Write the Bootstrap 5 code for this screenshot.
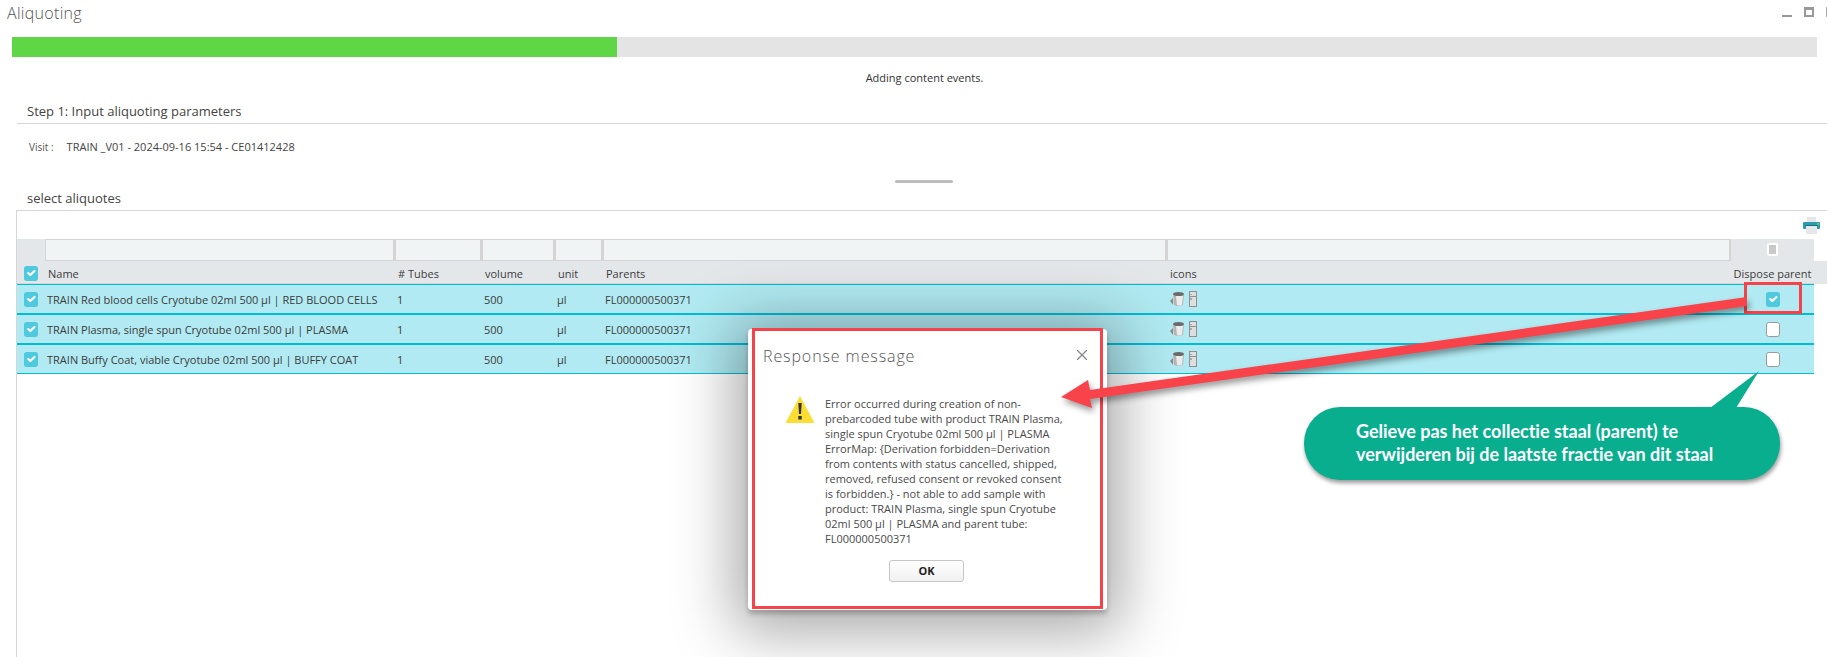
<!DOCTYPE html>
<html lang="en">
<head>
  <meta charset="UTF-8" />
  <title>Aliquoting</title>
  <link rel="stylesheet" href="https://cdn.jsdelivr.net/npm/bootstrap@5.3.0/dist/css/bootstrap.min.css" />
  <style>
    html, body { height: 100%; }
    body {
      position: relative;
      overflow: hidden;
      background: #fff;
      color: #3c3c3c;
      font-family: "Open Sans", "Liberation Sans", sans-serif;
      font-size: 11px;
    }
    /* window title */
    .win-head { height: 26px; padding-left: 7px; }
    .win-title { font-size: 16px; font-weight: 300; color: #555; letter-spacing: .3px; }
    .win-btn { position: absolute; top: 7px; border: 2px solid #999; border-top-width: 3px; width: 10px; height: 10px; left: 1804px; }
    .win-min { position: absolute; top: 15px; left: 1782px; width: 10px; height: 2px; background: #999; }
    .win-stub { position: absolute; top: 7px; left: 1826px; width: 1px; height: 10px; background: #aaa; }
    /* progress */
    .load-bar { height: 20px; margin: 11px 10px 0 12px; background: #e4e4e4; border-radius: 0; }
    .load-bar .progress-bar { background: #5fd646; }
    .load-status { height: 16px; margin-top: 13px; text-align: center; font-size: 11px; line-height: 16px; padding-left: 22px; color: #333; }
    /* sections */
    .step-head { margin: 14px 0 0 17px; height: 24px; padding-left: 10px; border-bottom: 1px solid #d6d6d6; font-size: 13px; line-height: 22px; color: #444; }
    .visit-line { margin: 15px 0 0 29px; height: 16px; line-height: 16px; font-size: 10px; color: #555; }
    .visit-line span { margin-left: 13px; font-size: 11px; color: #444; }
    .drag-handle { width: 58px; height: 3px; margin: 25px 0 0 895px; background: #bdbdbd; border-radius: 2px; }
    .sel-head { margin: 5px 0 0 27px; height: 20px; font-size: 13px; line-height: 20px; color: #444; }
    /* table box */
    .grid-box { margin: 2px 0 0 16px; border-top: 1px solid #d6d6d6; border-left: 1px solid #d6d6d6; height: 448px; }
    .grid-tools { height: 28px; padding: 6px 7px 0 0; }
    .grid-table { table-layout: fixed; width: 1810px; margin: 0; border-collapse: separate; border-spacing: 0; font-size: 11px; }
    .grid-table > :not(caption) > * > * { padding: 0; border: 0; box-shadow: none; background: transparent; color: #3c3c3c; }
    .grid-table .filter-row > * { height: 22px; background: #e4e7ea; vertical-align: middle; }
    .grid-table .filter-row > .spare-cell { background: #fff; }
    .filter-box { display: block; width: 100%; height: 22px; padding: 0; border-radius: 0; border: 1px solid #d4d4d4; border-width: 1px 2px 1px 1px; background: #f1f4f5; }
    .grid-table .name-row > * { height: 23px; background: #e4e7ea; font-weight: 400; vertical-align: middle; padding: 4px 0 0 3px; border-bottom: 1px solid #d6d6d6; }
    .grid-table .name-row > .spare-cell { border-bottom: 0; }
    .grid-table .data-row > * { height: 30px; background: #b1eaf2; border-bottom: 2px solid #00bcd4; vertical-align: middle; padding: 2px 0 0 2px; }
    .grid-table .data-row:first-child > * { height: 31px; border-top: 1px solid #00bcd4; }
    .grid-table .data-row:last-child > * { height: 29px; border-bottom-width: 1px; }
    .grid-table .data-row > .spare-cell { background: #fff; border: 0; }
    .grid-table .check-cell { padding: 0 0 0 7px !important; }
    .grid-table .name-row .check-cell { padding-top: 2px !important; }
    .grid-table .icon-cell { vertical-align: middle; padding-left: 3px; }
    .grid-table .mid-cell { padding: 0 !important; text-align: center; }
    .grid-table .head-right { padding: 4px 0 0 !important; text-align: center; white-space: nowrap; }
    .tick-box { display: block; width: 14px; height: 15px; margin: 0; border-radius: 2px; border: 0; float: none; background-color: #fff; }
    .tick-box:checked { background-color: #4fc9de; }
    .tick-box:not(:checked) { border: 1px solid #9a9a9a; }
    .tick-box.form-check-input:focus { box-shadow: none; }
    .mid-cell .tick-box { margin: 0 auto; }
    .mini-box { display: inline-block; width: 11px; height: 13px; margin-top: -2px; border-radius: 2px; border: 2px solid #fff; background: #c9c9c9; vertical-align: middle; }
    .row-icons { display: flex; align-items: center; gap: 4px; margin-top: -3px; }
    /* modal */
    .resp-modal {
      position: absolute; left: 748px; top: 329px; width: 359px; height: 281px;
      border: 0; border-radius: 4px; background: #fff;
      box-shadow: 0 4px 5px rgba(0,0,0,.22), 0 8px 60px 14px rgba(0,0,0,.34);
    }
    .resp-title { position: absolute; left: 15px; top: 15px; font-size: 16px; font-weight: 300; letter-spacing: .9px; color: #555; line-height: 24px; }
    .resp-close { position: absolute; right: 20px; top: 21px; font-size: 0; padding: 0; width: 10px; height: 10px; border: 0; background: transparent; }
    .resp-body { position: absolute; left: 77px; top: 67px; font-size: 11px; line-height: 15px; color: #4a4a4a; white-space: nowrap; }
    .resp-warn { position: absolute; left: 37px; top: 66px; }
    .resp-ok { position: absolute; left: 141px; top: 231px; width: 75px; height: 22px; padding: 0; border-radius: 3px; border: 1px solid #c6c6c6; background: linear-gradient(#fff, #f1f1f1); font-size: 11px; font-weight: 700; color: #222; }
    .red-frame { position: absolute; border: 3px solid #f4434a; }
    .red-frame-modal { left: 752px; top: 328px; width: 351px; height: 281px; }
    .red-frame-check { left: 1744px; top: 282px; width: 58px; height: 32px; }
    .arrow-layer { position: absolute; left: 0; top: 0; filter: drop-shadow(2px 4px 3px rgba(0,0,0,.4)); }
    /* callout */
    .call-out {
      position: absolute; left: 1304px; top: 407px; width: 476px; height: 73px;
      padding: 13px 0 0 52px;
      border-radius: 36px; background: #09ae8f; color: #fff;
      font-family: Lato, "Liberation Sans", sans-serif; font-size: 18px; font-weight: 700; line-height: 23px; white-space: nowrap;
      font-variant-ligatures: none;
      box-shadow: 1px 3px 4px rgba(0,0,0,.4);
    }
    .call-tail { position: absolute; left: 400px; top: -36px; }
  </style>
</head>
<body>
  <div class="win-head d-flex align-items-center">
    <span class="win-title">Aliquoting</span>
  </div>
  <span class="win-min"></span>
  <span class="win-btn"></span>
  <span class="win-stub"></span>

  <div class="progress load-bar">
    <div class="progress-bar" style="width: 33.5%"></div>
  </div>
  <div class="load-status">Adding content events.</div>

  <div class="step-head">Step 1: Input aliquoting parameters</div>
  <div class="visit-line">Visit :<span>TRAIN _V01 - 2024-09-16 15:54 - CE01412428</span></div>
  <div class="drag-handle"></div>
  <div class="sel-head">select aliquotes</div>

  <div class="grid-box">
    <div class="grid-tools d-flex justify-content-end">
      <svg width="17" height="17" viewBox="0 0 17 17">
        <rect x="4" y="0" width="9" height="5" fill="#e4e8ea"/>
        <rect x="0" y="5" width="17" height="7" rx="1" fill="#2f9bb0"/>
        <rect x="14" y="6" width="2" height="2" fill="#5fd646"/>
        <rect x="3" y="9" width="11" height="8" fill="#e4e8ea"/>
        <rect x="2" y="8" width="13" height="1" fill="#14707f"/>
      </svg>
    </div>
    <table class="table grid-table">
      <colgroup>
        <col style="width: 28px" /><col style="width: 350px" /><col style="width: 87px" /><col style="width: 73px" />
        <col style="width: 48px" /><col style="width: 564px" /><col style="width: 564px" /><col style="width: 83px" /><col style="width: 13px" />
      </colgroup>
      <thead>
        <tr class="filter-row">
          <th></th>
          <th><input class="form-control filter-box" /></th>
          <th><input class="form-control filter-box" /></th>
          <th><input class="form-control filter-box" /></th>
          <th><input class="form-control filter-box" /></th>
          <th><input class="form-control filter-box" /></th>
          <th><input class="form-control filter-box" /></th>
          <th class="text-center"><span class="mini-box"></span></th>
          <th class="spare-cell"></th>
        </tr>
        <tr class="name-row">
          <th class="check-cell"><input class="form-check-input tick-box" type="checkbox" checked /></th>
          <th>Name</th>
          <th># Tubes</th>
          <th>volume</th>
          <th>unit</th>
          <th>Parents</th>
          <th>icons</th>
          <th class="head-right">Dispose parent</th>
          <th class="spare-cell"></th>
        </tr>
      </thead>
      <tbody id="rows"></tbody>
    </table>
  </div>

  <!-- response dialog -->
  <div class="modal-content resp-modal">
    <div class="resp-title">Response message</div>
    <button class="resp-close" aria-label="Close">
      <svg width="10" height="10" viewBox="0 0 10 10"><path d="M0 0L10 10M10 0L0 10" stroke="#8a8a8a" stroke-width="1.3"/></svg>
    </button>
    <svg class="resp-warn" width="30" height="29" viewBox="0 0 30 29">
      <path d="M15 1L29.500 28H.5z" fill="#fbdd33"/>
      <path d="M13.300 8h3.400l-.7 11h-2zM13.300 21h3.400v3.500h-3.400z" fill="#333"/>
    </svg>
    <div class="resp-body">
      Error occurred during creation of non-<br>
      prebarcoded tube with product TRAIN Plasma,<br>
      single spun Cryotube 02ml 500 µl | PLASMA<br>
      ErrorMap: {Derivation forbidden=Derivation<br>
      from contents with status cancelled, shipped,<br>
      removed, refused consent or revoked consent<br>
      is forbidden.} - not able to add sample with<br>
      product: TRAIN Plasma, single spun Cryotube<br>
      02ml 500 µl | PLASMA and parent tube:<br>
      FL000000500371
    </div>
    <button class="btn resp-ok">OK</button>
  </div>

  <!-- annotations -->
  <div class="red-frame red-frame-modal"></div>
  <div class="red-frame red-frame-check"></div>
  <svg class="arrow-layer" width="1827" height="657" viewBox="0 0 1827 657">
    <polygon points="1747,297 1747,306 1090,399 1092,408 1061,397 1088,380 1090,390" fill="#f9434a"/>
  </svg>
  <div class="call-out">
    <svg class="call-tail" width="60" height="38" viewBox="0 0 60 38">
      <polygon points="55,0 6,37 32,37" fill="#09ae8f"/>
    </svg>
    Gelieve pas het collectie staal (parent) te<br>
    verwijderen bij de laatste fractie van dit staal
  </div>

  <script src="https://cdn.jsdelivr.net/npm/bootstrap@5.3.0/dist/js/bootstrap.bundle.min.js"></script>
  <script>
    // table rows
    const aliquots = [
      { name: "TRAIN Red blood cells Cryotube 02ml 500 µl | RED BLOOD CELLS", dispose: true },
      { name: "TRAIN Plasma, single spun Cryotube 02ml 500 µl | PLASMA", dispose: false },
      { name: "TRAIN Buffy Coat, viable Cryotube 02ml 500 µl | BUFFY COAT", dispose: false }
    ];
    const icons = `<div class="row-icons">
      <svg width="15" height="16" viewBox="0 0 15 16">
        <path d="M3 3h11l-1 11q-4 2-9 0z" fill="#b5b5b5"/>
        <path d="M6 5h7l-1 9q-3 1-5 0z" fill="#ececec"/>
        <ellipse cx="8.500" cy="3" rx="5.500" ry="2" fill="#6b6b6b"/>
        <path d="M3 7L0 10l3 4z" fill="#8c8c8c"/>
      </svg>
      <svg width="8" height="16" viewBox="0 0 8 16">
        <rect x=".5" y=".5" width="7" height="15" fill="#dedede" stroke="#8f8f8f"/>
        <path d="M1 5.500h6" stroke="#8f8f8f"/>
        <path d="M2 3v1M2 7v2" stroke="#777"/>
      </svg>
    </div>`;
    document.getElementById("rows").innerHTML = aliquots.map(a => `
      <tr class="data-row">
        <td class="check-cell"><input class="form-check-input tick-box" type="checkbox" checked /></td>
        <td>${a.name}</td><td>1</td><td>500</td><td>µl</td><td>FL000000500371</td>
        <td class="icon-cell">${icons}</td>
        <td class="mid-cell"><input class="form-check-input tick-box" type="checkbox" ${a.dispose ? "checked" : ""} /></td>
        <td class="spare-cell"></td>
      </tr>`).join("");
  </script>
</body>
</html>
